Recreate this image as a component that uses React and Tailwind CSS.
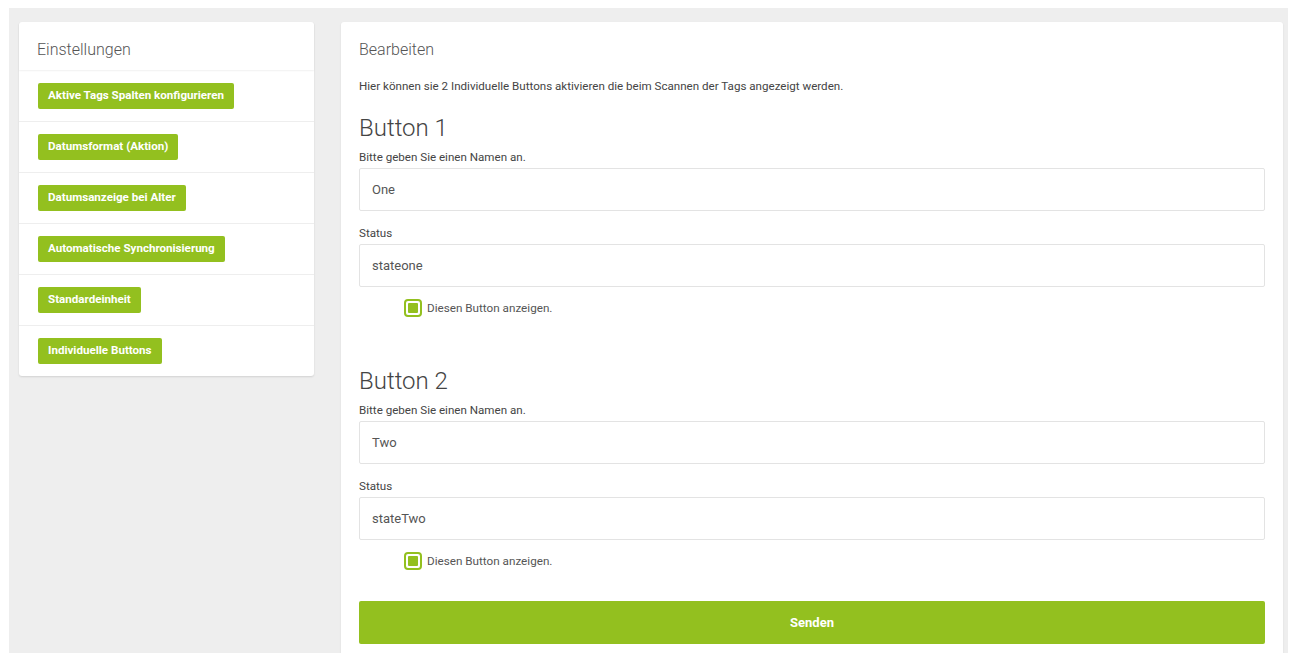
import React from "react";

const font = { fontFamily: "Roboto, 'Noto Sans', Arial, sans-serif" };

const menu = [
  "Aktive Tags Spalten konfigurieren",
  "Datumsformat (Aktion)",
  "Datumsanzeige bei Alter",
  "Automatische Synchronisierung",
  "Standardeinheit",
  "Individuelle Buttons",
];

function Check() {
  return (
    <div className="flex items-center h-[18px] pl-[45px]">
      <span className="w-[18px] h-[18px] rounded-[4px] border-2 border-[#93c01f] bg-white flex items-center justify-center">
        <span className="w-[10px] h-[10px] rounded-[1px] bg-[#93c01f]" />
      </span>
      <span className="ml-[5px] text-[11.7px] leading-[14px] text-[#555]">Diesen Button anzeigen.</span>
    </div>
  );
}

function Field({ label, value, first }) {
  return (
    <>
      <div className={`${first ? "mt-[8px]" : "mt-[15px]"} text-[11.6px] leading-[14px] text-[#444]`}>{label}</div>
      <div className="mt-[4px] h-[43px] border border-[#e3e3e3] rounded-[2px] flex items-center pl-[12px] text-[13px] text-[#555]">
        {value}
      </div>
    </>
  );
}

function Block({ title, name, status, top }) {
  return (
    <>
      <h3 className={`${top} text-[24px] leading-[28px] font-light text-[#444]`}>{title}</h3>
      <Field label="Bitte geben Sie einen Namen an." value={name} first />
      <Field label="Status" value={status} />
      <div className="mt-[12px]">
        <Check />
      </div>
    </>
  );
}

export default function App() {
  return (
    <div className="w-[1299px] h-[666px] bg-white pt-[8px] pl-[9px]" style={font}>
      <div className="w-[1279px] h-[645px] bg-[#eeeeee] pt-[14px] pl-[10px] pr-[5px] flex gap-[27px] overflow-hidden">
        <div className="w-[295px] self-start bg-white rounded-[3px] shadow-[0_1px_2px_rgba(0,0,0,0.12)]">
          <div className="h-[48px] pl-[18px] pt-[18px] text-[16px] leading-[20px] font-light text-[#555] relative shadow-[0_1px_2px_rgba(0,0,0,0.06)] rounded-t-[3px]">
            Einstellungen
          </div>
          {menu.map((m, i) => (
            <div
              key={m}
              className={`${i === 0 ? "h-[51px]" : "h-[51px] border-t border-[#eeeeee]"} flex items-center pl-[19px]`}
            >
              <span className="h-[26px] px-[10px] flex items-center bg-[#93c01f] rounded-[2px] text-white text-[11.6px] font-bold">
                {m}
              </span>
            </div>
          ))}
        </div>
        <div className="flex-1 bg-white rounded-t-[3px] pt-[18px] pl-[18px] pr-[18px] shadow-[0_1px_2px_rgba(0,0,0,0.1)]">
          <h2 className="text-[16px] leading-[20px] font-light text-[#555]">Bearbeiten</h2>
          <p className="mt-[18px] text-[11.6px] leading-[16px] text-[#444]">
            Hier können sie 2 Individuelle Buttons aktivieren die beim Scannen der Tags angezeigt werden.
          </p>
          <Block title="Button 1" name="One" status="stateone" top="mt-[20px]" />
          <Block title="Button 2" name="Two" status="stateTwo" top="mt-[50px]" />
          <button className="mt-[31px] w-full h-[43px] bg-[#93c01f] rounded-[2px] text-white text-[13px] font-bold">
            Senden
          </button>
        </div>
      </div>
    </div>
  );
}
